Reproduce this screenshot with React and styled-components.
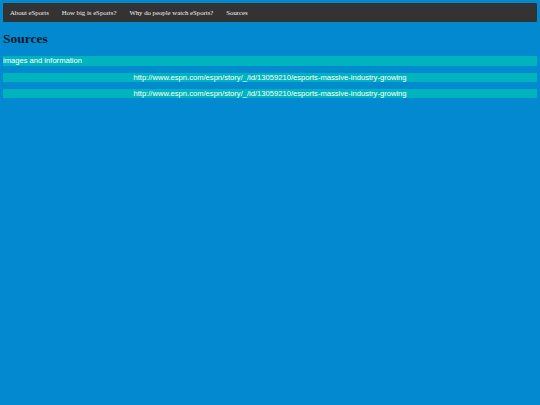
import React from "react";
import styled, { createGlobalStyle } from "styled-components";

const GlobalStyle = createGlobalStyle`
  html, body {
    margin: 0;
    padding: 0;
    background: #0389d0;
  }
  body {
    padding: 3px;
    font-family: "Liberation Sans", Arial, sans-serif;
  }
`;

const links = [
  "About eSports",
  "How big is eSports?",
  "Why do people watch eSports?",
  "Sources",
];

const sources = [
  "http://www.espn.com/espn/story/_/id/13059210/esports-massive-industry-growing",
  "http://www.espn.com/espn/story/_/id/13059210/esports-massive-industry-growing",
];

function App() {
  return (
    <>
      <GlobalStyle />
      <Nav>
        {links.map((l) => (
          <NavLink key={l} href="#">
            {l}
          </NavLink>
        ))}
      </Nav>
      <Heading>Sources</Heading>
      <Bar tall>images and information</Bar>
      {sources.map((s, i) => (
        <Bar key={i} centered>
          {s}
        </Bar>
      ))}
    </>
  );
}

const Nav = styled.nav`
  display: flex;
  height: 19px;
  background: #333333;
  border-radius: 1px;
  padding: 0 0.5px;
`;

const NavLink = styled.a`
  font-family: "Liberation Serif", "Times New Roman", serif;
  font-size: 6.75px;
  line-height: 19px;
  color: #f2f2f2;
  text-decoration: none;
  padding: 0 6.5px;
`;

const Heading = styled.h2`
  font-family: "Liberation Serif", "Times New Roman", serif;
  font-size: 13.5px;
  font-weight: bold;
  color: #0a1a2a;
  margin: 9px 0 9px;
  line-height: 16px;
`;

const Bar = styled.p`
  background: #00b4bd;
  color: #ffffff;
  font-size: 7.6px;
  line-height: ${(p) => (p.tall ? 10 : 9.5)}px;
  height: ${(p) => (p.tall ? 10 : 9.5)}px;
  margin: 0 0 6.5px;
  text-align: ${(p) => (p.centered ? "center" : "left")};
`;

export default App;
